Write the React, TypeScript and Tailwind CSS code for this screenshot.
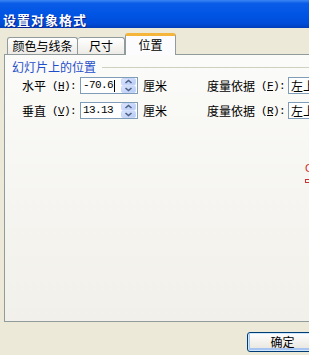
import React from 'react';

const cjk = "font-['Noto_Sans_CJK_SC','Noto_Sans',sans-serif]";
const half = "font-['Liberation_Mono',monospace] text-[11px] tracking-[-0.6px]";

// half-width ASCII piece (SimSun style advance of 6px)
const Half: React.FC<{ children: React.ReactNode }> = ({ children }) => (
  <span className={`${half} whitespace-pre shrink-0`}>{children}</span>
);

const Spin: React.FC = () => (
  <svg width="15" height="15" viewBox="0 0 15 15" className="shrink-0">
    <defs>
      <linearGradient id="sp" x1="0" y1="0" x2="1" y2="1">
        <stop offset="0" stopColor="#DDE7FE" />
        <stop offset="1" stopColor="#B4C8F6" />
      </linearGradient>
    </defs>
    <rect x="0.5" y="0.5" width="14" height="6.5" rx="1.5" fill="url(#sp)" stroke="#C8D6F8" />
    <rect x="0.5" y="8" width="14" height="6.5" rx="1.5" fill="url(#sp)" stroke="#C8D6F8" />
    <path d="M4.5 5 L7.5 2.5 L10.5 5" fill="none" stroke="#4D6185" strokeWidth="1.6" />
    <path d="M4.5 10 L7.5 12.5 L10.5 10" fill="none" stroke="#4D6185" strokeWidth="1.6" />
  </svg>
);

const SpinInput: React.FC<{ value: string; caret?: boolean }> = ({ value, caret }) => (
  <div className="w-[58px] h-[17px] border border-[#7F9DB9] bg-white flex items-center pl-[2px] pr-[1px] shrink-0">
    <div className="flex-1 flex items-center">
      <span className="font-['Liberation_Mono',monospace] text-[11px] tracking-[-0.6px] text-black leading-[13px]">{value}</span>
      {caret && <span className="w-px h-[12px] bg-black ml-[1px]" />}
    </div>
    <Spin />
  </div>
);

const Row: React.FC<{ label: string; key1: string; value: string; key2: string; caret?: boolean }> = ({ label, key1, value, key2, caret }) => (
  <div className="flex items-center h-[17px] pl-[17px] text-[12px] text-black whitespace-nowrap">
    <div className="w-[58px] shrink-0 flex items-center leading-[14px]">
      <span className="shrink-0">{label}</span>
      <Half>{' ('}<u>{key1}</u>{'):'}</Half>
    </div>
    <SpinInput value={value} caret={caret} />
    <span className="ml-[5px] shrink-0 leading-[14px]">厘米</span>
    <div className="ml-[40px] w-[81px] flex items-center leading-[14px] shrink-0">
      <span className="shrink-0">度量依据</span>
      <Half>{' ('}<u>{key2}</u>{'):'}</Half>
    </div>
    <div className="w-[60px] h-[17px] border border-[#7F9DB9] bg-white pl-[2px] flex items-center shrink-0 leading-[14px]">
      左上
    </div>
  </div>
);

export default function App() {
  return (
    <div className={`w-[309px] h-[355px] overflow-hidden bg-[#ECE9D8] flex flex-col whitespace-nowrap ${cjk}`}>
      {/* 标题栏 */}
      <div className="h-[28px] shrink-0 bg-[linear-gradient(to_bottom,#3C87F4_0%,#0A5CE8_12%,#0054E3_55%,#004CD8_85%,#003DB8_100%)] pl-[3px] pt-[6px]">
        <span className="text-white font-bold text-[13px] leading-[16px] tracking-[1px] [text-shadow:1px_1px_0_#0A1F8C]">
          设置对象格式
        </span>
      </div>

      {/* 选项卡 */}
      <div className="h-[26px] shrink-0 flex items-end pl-[7px] text-[12px] text-black">
        <div className="w-[71px] h-[17px] shrink-0 border border-b-0 border-[#919B9C] rounded-t-[3px] bg-linear-to-b from-white to-[#ECEBE6] flex items-center justify-center leading-[14px]">
          颜色与线条
        </div>
        <div className="w-[47px] h-[17px] shrink-0 border border-b-0 border-l-0 border-[#919B9C] rounded-t-[3px] bg-linear-to-b from-white to-[#ECEBE6] flex items-center justify-center leading-[14px]">
          尺寸
        </div>
        <div className="w-[51px] h-[22px] shrink-0 -mb-px relative z-10 border border-b-0 border-[#919B9C] border-t-[3px] border-t-[#F5B53A] rounded-t-[3px] bg-[#FCFCFE] flex items-start justify-center pt-[2px] leading-[14px]">
          位置
        </div>
      </div>

      {/* 面板 */}
      <div className="h-[268px] shrink-0 ml-[4px] border border-r-0 border-[#919B9C] bg-linear-to-b from-[#FBFBF9] to-[#F1F0EA] relative flex flex-col">
        <div className="mt-[5px] h-[14px] flex items-center pl-[7px]">
          <span className="text-[12px] leading-[14px] text-[#1F4ECB] shrink-0">幻灯片上的位置</span>
          <div className="flex-1 h-px bg-[#D0D0BF] ml-[6px]" />
        </div>
        <div className="mt-[3px] flex flex-col gap-[8px]">
          <Row label="水平" key1="H" value="-70.6" key2="F" caret />
          <Row label="垂直" key1="V" value="13.13" key2="R" />
        </div>

        {/* 右侧被截断的红色内容 */}
        <div className="absolute left-[300px] top-[107px] flex flex-col items-start">
          <span className="text-[11px] leading-[12px] text-[#D03030] font-['Liberation_Sans',sans-serif]">C</span>
          <span className="mt-[5px] w-[5px] h-[4px] border border-[#D03030]" />
        </div>
      </div>

      {/* 按钮 */}
      <div className="flex-1 flex items-start pl-[247px] pt-[10px]">
        <div className="w-[71px] h-[20px] shrink-0 rounded-[3px] border border-[#003C74] bg-linear-to-b from-white to-[#E6E4DC] shadow-[inset_0_0_0_1px_#CEE7FF,inset_0_-1px_0_2px_#A8C4F0] flex items-center justify-center text-[12px] leading-[14px] text-black">
          确定
        </div>
      </div>
    </div>
  );
}
